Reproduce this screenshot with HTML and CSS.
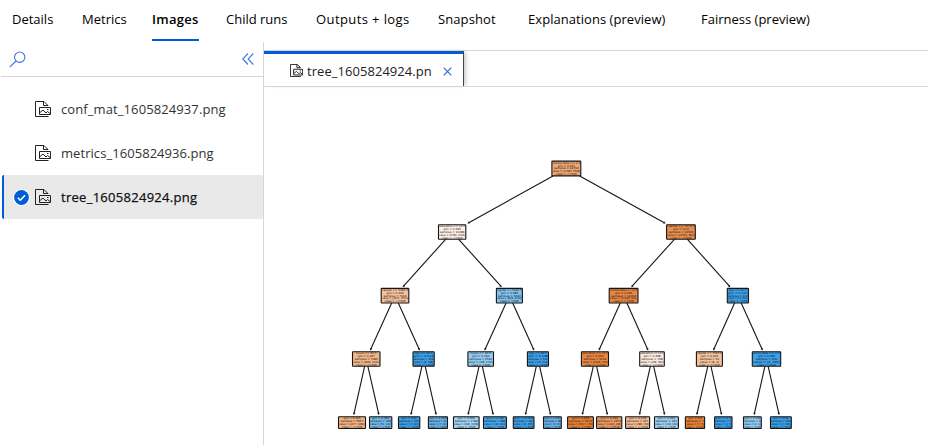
FILE: index.html
```html
<!DOCTYPE html>
<html lang="en">
<head>
<meta charset="utf-8">
<title>Run images</title>
<link rel="stylesheet" href="styles.css">
</head>
<body>
<svg class="defs" aria-hidden="true">
  <symbol id="file-image" viewBox="0 0 16 16">
    <path d="M13.500 15.500H.5V.5h8.500l4 4M8.500.5v4h4.500" />
    <path d="M4.500 6.500h11v7h-11z" />
    <path d="M5 11.500l3-2.500 3 3 1.500-1.500 2.500 2M12 8.500h1.500" />
  </symbol>
</svg>
<nav class="tabs">
  <a class="tab details">Details</a>
  <a class="tab metrics">Metrics</a>
  <a class="tab images active">Images</a>
  <a class="tab child">Child runs</a>
  <a class="tab outputs">Outputs + logs</a>
  <a class="tab snapshot">Snapshot</a>
  <a class="tab explain">Explanations (preview)</a>
  <a class="tab fairness">Fairness (preview)</a>
</nav>
<main class="workspace">
  <aside class="sidebar">
    <div class="toolbar">
      <svg class="search" viewBox="0 0 17 17"><circle cx="10.700" cy="6.200" r="5.200"/><path d="M7 10L.8 16.200"/></svg>
      <svg class="collapse" viewBox="0 0 12 12"><path d="M6 .5L.8 6 6 11.500M11.300.5L6.100 6l5.200 5.500"/></svg>
    </div>
    <div class="files">
      <div class="file"><svg class="icon"><use href="#file-image"/></svg><span class="name n1">conf_mat_1605824937.png</span></div>
      <div class="file"><svg class="icon"><use href="#file-image"/></svg><span class="name n2">metrics_1605824936.png</span></div>
      <div class="file selected"><svg class="check" viewBox="0 0 17 17"><circle class="halo" cx="8.500" cy="8.500" r="8.500"/><circle class="disc" cx="8.500" cy="8.500" r="7.400"/><path d="M4.800 8.700l2.500 2.500 4.800-5"/></svg><svg class="icon"><use href="#file-image"/></svg><span class="name n3">tree_1605824924.png</span></div>
    </div>
  </aside>
  <section class="viewer">
    <div class="filetabs">
      <div class="filetab">
        <svg class="icon small" viewBox="0 0 16 16"><use href="#file-image"/></svg>
        <span class="title">tree_1605824924.pn</span>
        <svg class="close" viewBox="0 0 9 9"><path d="M.7.7l7.600 7.600M8.300.7L.7 8.300"/></svg>
      </div>
    </div>
    <svg class="tree" viewBox="264 87 664 358"></svg>
  </section>
</main>
<script src="tree.js"></script>
</body>
</html>
```

FILE: styles.css
```css
* { box-sizing: border-box; }
body {
  margin: 0;
  width: 928px;
  height: 445px;
  overflow: hidden;
  background: #fff;
  color: #111;
  font: 13px/20px "Open Sans", "Noto Sans", sans-serif;
}
svg { display: block; flex: none; fill: none; }
.defs { position: absolute; width: 0; height: 0; }
.tabs { display: flex; height: 42px; padding: 9px 0 0 12px; }
.tab { height: 32px; margin-right: 27px; white-space: nowrap; color: #000; }
.details { width: 43px; }
.metrics { width: 43px; }
.images { width: 47px; }
.child { width: 63px; }
.outputs { width: 95px; letter-spacing: 0.4px; }
.snapshot { width: 59px; margin-right: 31px; letter-spacing: 0.1px; }
.explain { width: 139px; margin-right: 34px; letter-spacing: 0.05px; }
.fairness { width: 111px; margin-right: 0; }
.tab.active { font-weight: 600; letter-spacing: 0.3px; border-bottom: 2px solid #015cda; }
.workspace { display: flex; height: 403px; }
.sidebar { width: 264px; flex: none; border-right: 1px solid #d6d6d6; }
.toolbar {
  display: flex;
  justify-content: space-between;
  height: 35px;
  margin-left: 1px;
  padding: 9px 9px 0 8px;
  border-bottom: 1px solid #d6d6d6;
}
.search { width: 17px; height: 17px; stroke: #3f72dc; stroke-width: 1.1; }
.collapse { width: 12px; height: 12px; margin-top: 2px; stroke: #3f78df; stroke-width: 1.1; }
.files { padding: 10px 0 0 2px; }
.file { display: flex; align-items: center; height: 44px; padding-left: 33px; color: #333; }
.file.selected {
  padding-left: 9px;
  background: #e9e9e9;
  border-left: 2px solid #015cda;
  border-radius: 2px;
  color: #111;
}
.check { width: 17px; height: 17px; margin-right: 5px; stroke: #fff; stroke-width: 1.6; }
.halo { fill: #fff; stroke: none; }
.disc { fill: #015cda; stroke: none; }
.icon { width: 16px; height: 16px; stroke: #222; stroke-width: 1; }
.name { margin-left: 10px; white-space: nowrap; letter-spacing: 0.1px; }
.n2 { letter-spacing: 0.06px; }
.n3 { letter-spacing: 0.28px; -webkit-text-stroke: 0.25px #111; }
.viewer { flex: 1; min-width: 0; padding-top: 8px; }
.filetabs {
  display: flex;
  height: 37px;
  border-top: 1px solid #d6d6d6;
  border-bottom: 1px solid #d6d6d6;
}
.filetab {
  display: flex;
  align-items: center;
  width: 200px;
  padding: 5px 0 0 26px;
  border-right: 1px solid #444;
  background: linear-gradient(#015cda 3px, #fff 3px);
  box-shadow: 3px 0 4px -1px #ccc;
  color: #222;
}
.small { width: 13px; height: 13px; margin-top: -2px; stroke-width: 1.2; }
.title { width: 126px; margin-left: 4px; white-space: nowrap; letter-spacing: 0.05px; }
.close { width: 9px; height: 9px; margin-left: 10px; stroke: #2e68d8; stroke-width: 1.2; }
.tree { width: 664px; height: 358px; }
.node { stroke: #151515; stroke-width: 1.1; }
.edge { stroke: #151515; stroke-width: 1.1; }
.arrow { fill: #151515; }
.label {
  fill: #111;
  font-family: "DejaVu Sans", sans-serif;
  font-size: 2.8px;
  text-anchor: middle;
}
```

FILE: tree.js
```js
// Each node: left, right, fill, split rule, gini, samples, value
const levels = [
  { top: 161.1, bottom: 175.9, nodes: [
    [551.9, 580.8, '#eda775', 'marital-status <= 2.5', '0.367', '22792', '[17284, 5508]']] },
  { top: 224.7, bottom: 239.3, nodes: [
    [438.5, 465.8, '#fdeee4', 'education <= 12.5', '0.495', '10486', '[5780, 4706]'],
    [666.6, 695.3, '#e88f4f', 'capital <= 7073.5', '0.12', '12306', '[11504, 802]']] },
  { top: 288.4, bottom: 303, nodes: [
    [381.2, 408.8, '#f5c09a', 'capital <= 5095.5', '0.443', '7442', '[4972, 2470]'],
    [496.4, 522.4, '#80c0ee', 'capital <= 5095.5', '0.389', '3044', '[808, 2236]'],
    [609.2, 638, '#e68743', 'marital-status <= 12.5', '0.095', '12094', '[11492, 602]'],
    [727.3, 748.5, '#3c9fe7', 'age <= 20.5', '0.107', '212', '[12, 200]']] },
  { top: 351.7, bottom: 366.3, nodes: [
    [352.5, 380, '#f2b68b', 'hours <= 34.5', '0.427', '7086', '[4964, 2122]'],
    [413, 434.2, '#3c9fe7', 'age <= 60.5', '0.044', '356', '[8, 348]'],
    [467.9, 493.5, '#94caf0', 'hours <= 30.5', '0.432', '2520', '[798, 1722]'],
    [527.4, 548.5, '#3c9fe7', 'age <= 62.5', '0.038', '524', '[10, 514]'],
    [581.4, 608.5, '#e68640', 'education <= 12.5', '0.054', '9716', '[9446, 270]'],
    [639.7, 664.3, '#fae9de', 'education <= 10.5', '0.498', '768', '[408, 360]'],
    [696.4, 722.4, '#f3c19d', 'capital <= 7565.5', '0.444', '12', '[8, 4]'],
    [752.3, 780.7, '#3c9fe7', 'workclass <= 0.5', '0.039', '200', '[4, 196]']] },
  { top: 416.7, bottom: 428.5, nodes: [
    [338.5, 365.5, '#f0b083', '', '0.405', '5957', '[4277, 1680]'],
    [369.5, 391.8, '#72b8eb', '', '0.391', '196', '[52, 144]'],
    [398.5, 419.8, '#3c9fe7', '', '0.02', '325', '[3, 322]'],
    [428.4, 447.5, '#67b2e9', '', '0.359', '31', '[7, 24]'],
    [453.5, 479.1, '#a1d1f3', '', '0.462', '1784', '[646, 1138]'],
    [483.5, 506.4, '#46a4e9', '', '0.109', '684', '[40, 644]'],
    [513.3, 534, '#3c9fe7', '', '0.026', '461', '[6, 455]'],
    [543.5, 561.3, '#67b2e9', '', '0.337', '28', '[6, 22]'],
    [567.6, 593.4, '#e58139', '', '0.034', '9276', '[9117, 159]'],
    [596.6, 621.8, '#eb9b61', '', '0.234', '1670', '[1444, 226]'],
    [625.6, 649.6, '#f3bb93', '', '0.439', '427', '[288, 139]'],
    [654.5, 678.4, '#9dcff3', '', '0.454', '341', '[119, 222]'],
    [685.4, 704.6, '#e58139', '', '0.0', '7', '[7, 0]'],
    [714.6, 732, '#3c9fe7', '', '0.0', '5', '[0, 5]'],
    [743.5, 761.3, '#91c9f1', '', '0.444', '6', '[2, 4]'],
    [770.5, 791.3, '#399de5', '', '0.01', '194', '[1, 193]']] }
];

const svg = document.querySelector('.tree');
function add(name, attrs, text) {
  const el = document.createElementNS('http://www.w3.org/2000/svg', name);
  for (const key in attrs) el.setAttribute(key, attrs[key]);
  if (text) el.textContent = text;
  svg.appendChild(el);
}

levels.forEach((level, depth) => {
  const cy = (level.top + level.bottom) / 2;
  level.nodes.forEach((n, i) => {
    const cx = (n[0] + n[1]) / 2;
    if (depth > 0) {
      const up = levels[depth - 1];
      const p = up.nodes[i >> 1];
      const px = (p[0] + p[1]) / 2;
      const py = (up.top + up.bottom) / 2;
      const at = y => px + (cx - px) * (y - py) / (cy - py);
      const tip = level.top - (depth === 4 ? 1.8 : 1.2);
      const angle = Math.atan2(cy - py, cx - px) * 180 / Math.PI;
      add('line', { class: 'edge', x1: at(up.bottom), y1: up.bottom, x2: at(tip - 1), y2: tip - 1 });
      add('path', { class: 'arrow', d: 'M0 0L-2.300-1.200V1.200Z', transform: `translate(${at(tip)} ${tip}) rotate(${angle})` });
    }
    add('rect', { class: 'node', x: n[0], y: level.top, width: n[1] - n[0], height: level.bottom - level.top, rx: 0.5, fill: n[2] });
    const lines = [n[3], 'gini = ' + n[4], 'samples = ' + n[5], 'value = ' + n[6],
      'class = ' + (/^#[ef]/.test(n[2]) ? '<=50K' : '>50K')].filter(Boolean);
    lines.forEach((line, k) => {
      const attrs = { class: 'label', x: cx, y: level.top + 2.6 + k * 2.8 };
      const limit = n[1] - n[0] - 1.5;
      if (line.length * 1.7 > limit) {
        attrs.textLength = limit;
        attrs.lengthAdjust = 'spacingAndGlyphs';
      }
      add('text', attrs, line);
    });
  });
});
```
